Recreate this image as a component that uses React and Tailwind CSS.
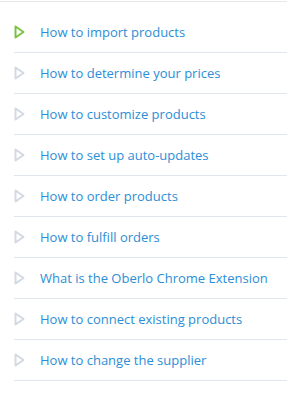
import React from "react";

const items = [
  "How to import products",
  "How to determine your prices",
  "How to customize products",
  "How to set up auto-updates",
  "How to order products",
  "How to fulfill orders",
  "What is the Oberlo Chrome Extension",
  "How to connect existing products",
  "How to change the supplier",
];

function Tri({ active }) {
  return (
    <svg width="11" height="14" viewBox="0 0 11 14" className="block">
      <path
        d="M1.5 1.5 L9.5 7 L1.5 12.5 Z"
        fill="none"
        stroke={active ? "#7cc142" : "#d3d9e2"}
        strokeWidth={2}
        strokeLinejoin="round"
      />
    </svg>
  );
}

export default function App() {
  return (
    <div className="w-[287px] h-[396px] bg-white" style={{ fontFamily: '"Open Sans", sans-serif' }}>
      <div className="h-px" />
      <div className="border-t border-[#e6e8ec]" />
      <ul className="pl-[14px] pt-[10px]">
        {items.map((t, i) => (
          <li key={t} className="h-[41px] border-b border-[#e1e6ee] flex items-center">
            <span className="w-[26px] flex items-center">
              <Tri active={i === 0} />
            </span>
            <span className="text-[13px] text-[#2b8ed6] leading-none">{t}</span>
          </li>
        ))}
      </ul>
    </div>
  );
}
